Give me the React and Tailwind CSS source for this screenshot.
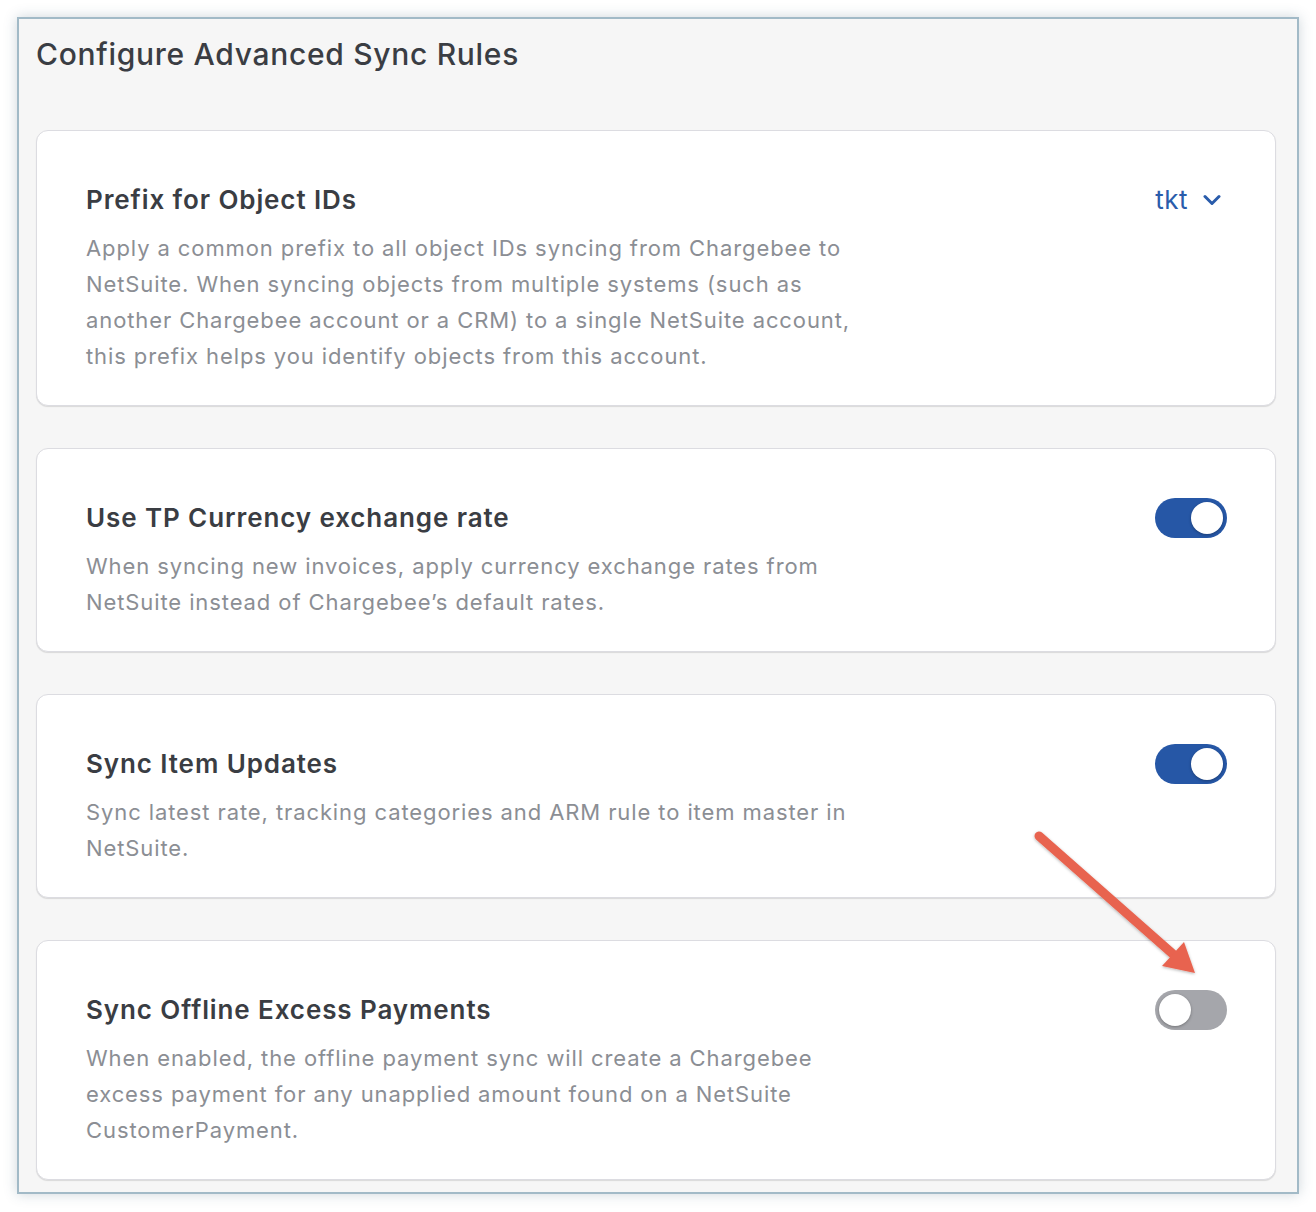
import React from "react";

function Toggle({ on }) {
  return (
    <div
      className={
        "relative h-[40px] w-[72px] shrink-0 rounded-full " +
        (on ? "bg-[#2657a6]" : "bg-[#a5a6ab]")
      }
    >
      <div
        className={
          "absolute top-[4px] h-[32px] w-[32px] rounded-full bg-white shadow-[0_1px_3px_rgba(0,0,0,0.3)] " +
          (on ? "left-[36px]" : "left-[4px]")
        }
      />
    </div>
  );
}

function Card({ title, lines, right }) {
  return (
    <div className="rounded-[12px] border border-[#dcdce1] bg-white pl-[49px] pr-[48px] pt-[51px] pb-[31px] shadow-[0_1px_1px_rgba(0,0,0,0.12)]">
      <div className="flex h-[36px] items-center justify-between">
        <div className="text-[26px] font-semibold leading-[36px] tracking-[0.9px] text-[#3a3d43]">
          {title}
        </div>
        {right}
      </div>
      <div className="mt-[12px] text-[22px] leading-[36px] tracking-[0.9px] text-[#8b8e94]">
        {lines.map((l, i) => (
          <div key={i} className="whitespace-nowrap">
            {l}
          </div>
        ))}
      </div>
    </div>
  );
}

export default function App() {
  return (
    <div
      className="relative h-[1212px] w-[1316px] bg-white"
      style={{ fontFamily: "Inter, 'Noto Sans', sans-serif" }}
    >
      <div className="absolute left-[17px] top-[17px] h-[1177px] w-[1282px] border-2 border-[#a2bac7] bg-[#f6f6f6] px-[17px] pt-[17px] shadow-[0_0_12px_rgba(60,90,110,0.25)] overflow-hidden">
        <h1 className="text-[30px] font-medium leading-[36px] tracking-[0.7px] text-[#3a3d43]">
          Configure Advanced Sync Rules
        </h1>
        <div className="mt-[58px] flex w-[1240px] flex-col gap-[42px]">
          <Card
            title="Prefix for Object IDs"
            lines={[
              "Apply a common prefix to all object IDs syncing from Chargebee to",
              "NetSuite. When syncing objects from multiple systems (such as",
              "another Chargebee account or a CRM) to a single NetSuite account,",
              "this prefix helps you identify objects from this account.",
            ]}
            right={
              <div className="flex items-center gap-[15px] pr-[6px] text-[26px] leading-[36px] tracking-[0.5px] text-[#2a5cab]">
                <span>tkt</span>
                <svg width="18" height="12" viewBox="0 0 18 12" fill="none">
                  <path
                    d="M2 2.5 L9 9.5 L16 2.5"
                    stroke="#2a5cab"
                    strokeWidth="3"
                    strokeLinecap="round"
                    strokeLinejoin="round"
                  />
                </svg>
              </div>
            }
          />
          <Card
            title="Use TP Currency exchange rate"
            lines={[
              "When syncing new invoices, apply currency exchange rates from",
              "NetSuite instead of Chargebee\u2019s default rates.",
            ]}
            right={<Toggle on />}
          />
          <Card
            title="Sync Item Updates"
            lines={[
              "Sync latest rate, tracking categories and ARM rule to item master in",
              "NetSuite.",
            ]}
            right={<Toggle on />}
          />
          <Card
            title="Sync Offline Excess Payments"
            lines={[
              "When enabled, the offline payment sync will create a Chargebee",
              "excess payment for any unapplied amount found on a NetSuite",
              "CustomerPayment.",
            ]}
            right={<Toggle on={false} />}
          />
        </div>
      </div>
      <svg
        className="pointer-events-none absolute left-0 top-0"
        width="1316"
        height="1212"
        viewBox="0 0 1316 1212"
      >
        <defs>
          <filter id="sh" x="-20%" y="-20%" width="140%" height="140%">
            <feDropShadow dx="0" dy="1" stdDeviation="1.5" floodColor="#000" floodOpacity="0.3" />
          </filter>
        </defs>
        <g filter="url(#sh)">
          <line
            x1="1039"
            y1="836"
            x2="1174"
            y2="955"
            stroke="#e8634f"
            strokeWidth="9"
            strokeLinecap="round"
          />
          <polygon points="1195,973 1162,966 1184,942" fill="#e8634f" />
        </g>
      </svg>
    </div>
  );
}
